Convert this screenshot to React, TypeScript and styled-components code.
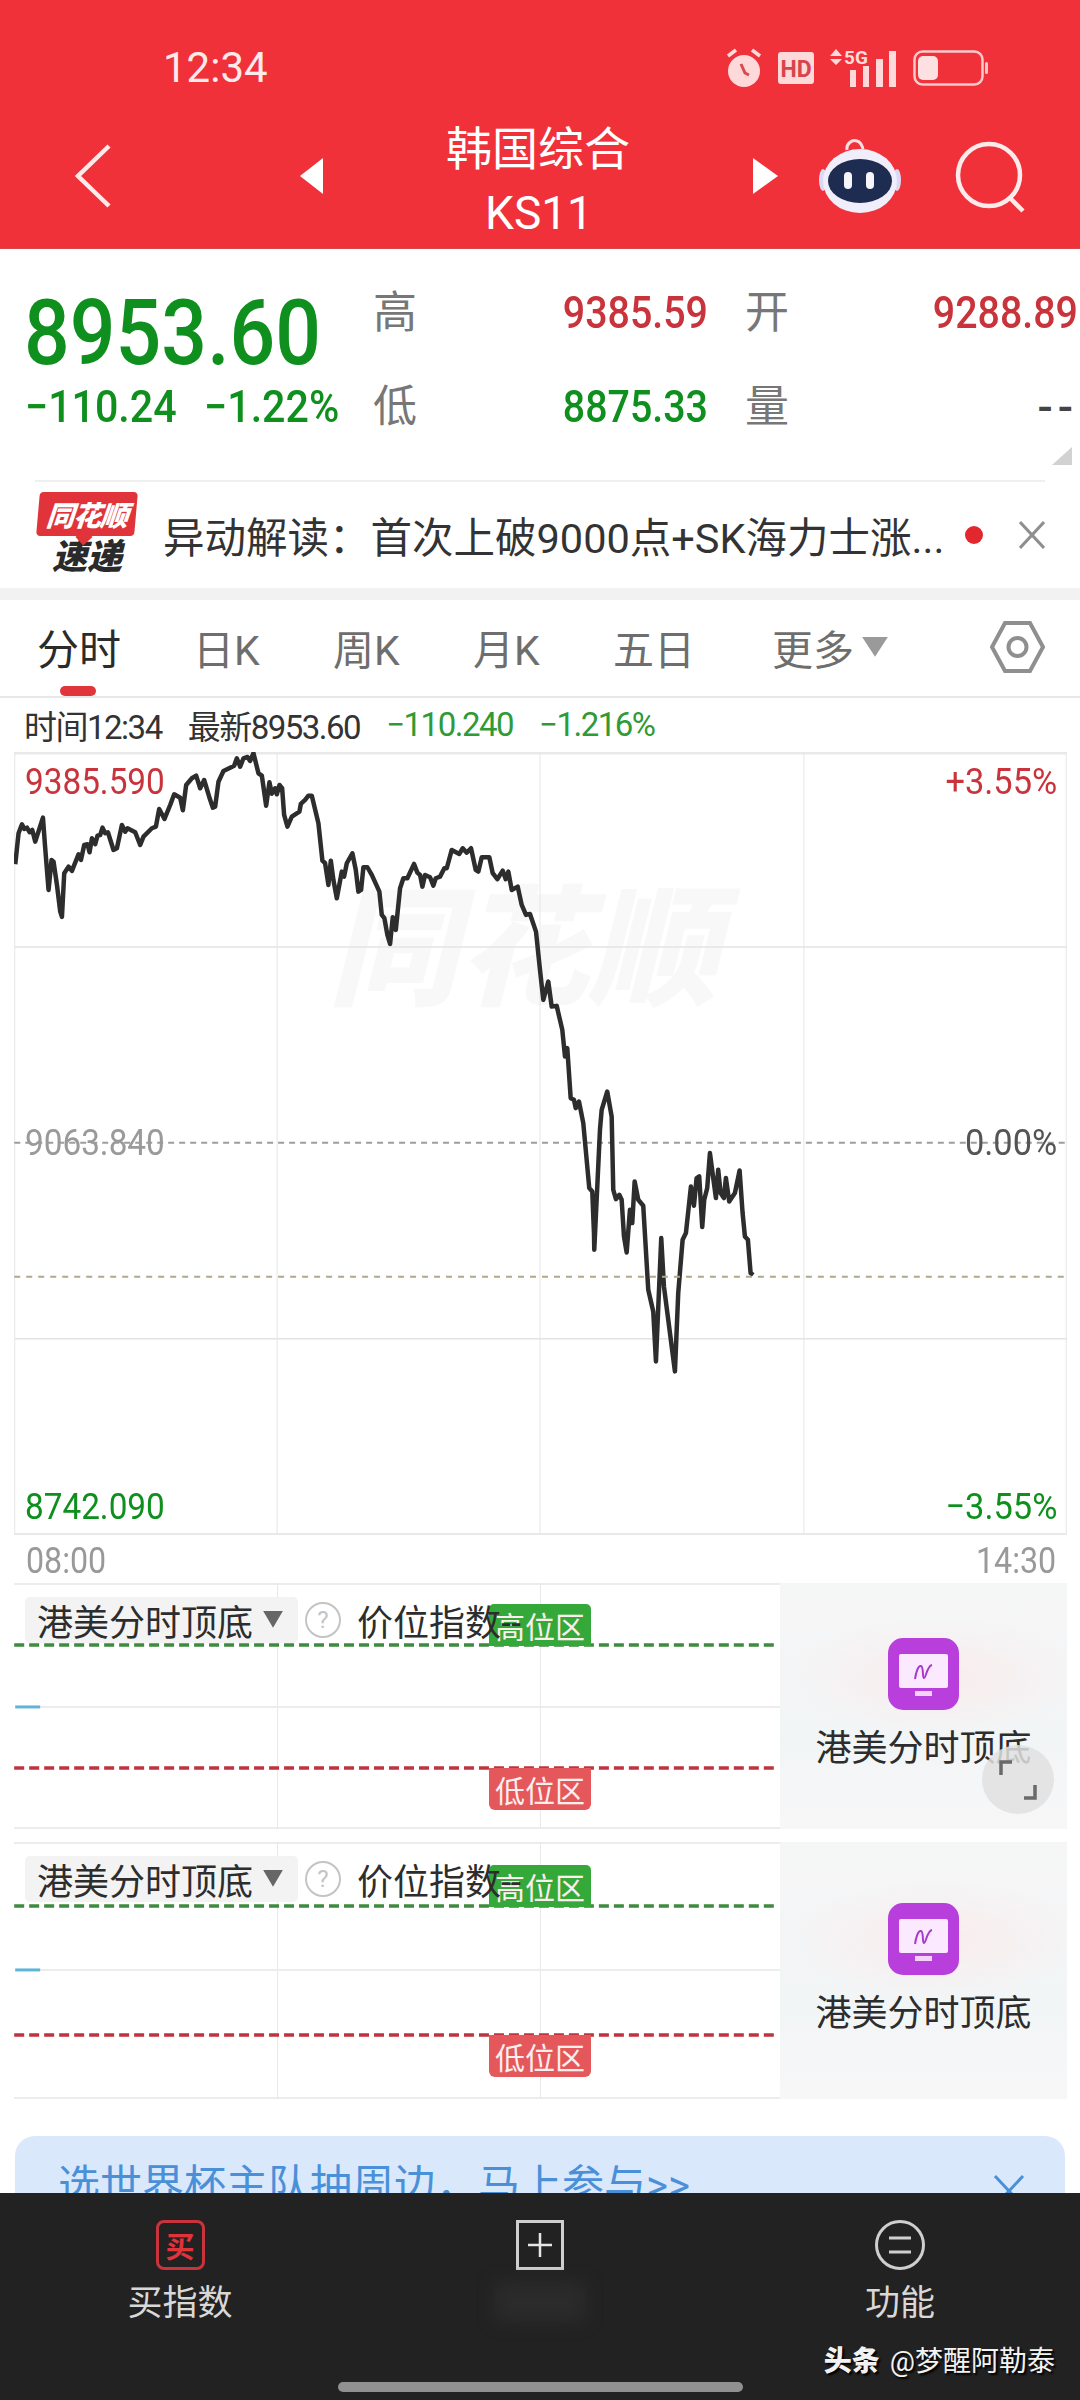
import React from 'react';
import styled, { createGlobalStyle } from 'styled-components';

const GlobalStyle = createGlobalStyle`
  html, body {
    margin: 0;
    padding: 0;
    background: #fff;
  }
  * {
    box-sizing: border-box;
  }
`;

const FONT = `Roboto, "Noto Sans CJK SC", sans-serif`;
const RED = '#c9333b';
const GREEN = '#0f8f1e';

const Page = styled.div`
  width: 1080px;
  height: 2400px;
  overflow: hidden;
  display: flex;
  flex-direction: column;
  background: #fff;
  font-family: ${FONT};
`;

/* header */
const Header = styled.header`
  height: 249px;
  background: #f03139;
  border-bottom: 1px solid #d6474c;
  color: #fff;
`;

const StatusBar = styled.div`
  height: 104px;
  padding: 32px 92px 0 163px;
  display: flex;
  align-items: center;
  justify-content: space-between;
`;

const Clock = styled.div`
  font-size: 42px;
  line-height: 72px;
  color: #fdeaea;
`;

const StatusIcons = styled.div`
  display: flex;
  align-items: center;
  gap: 16px;
`;

const Nav = styled.nav`
  height: 144px;
  padding: 0 55px 0 75px;
  display: flex;
  align-items: center;
`;

const BackIcon = styled.svg`
  width: 36px;
  height: 64px;
  margin-right: 189px;
  flex-shrink: 0;
`;

const NavTitle = styled.div`
  flex: 1;
  padding-top: 10px;
  display: flex;
  flex-direction: column;
  align-items: center;
`;

const TitleLine = styled.div`
  font-size: 46px;
  line-height: 64px;
`;

const CodeLine = styled.div`
  font-size: 46px;
  line-height: 64px;
  padding-left: 2px;
`;

const RobotIcon = styled.svg`
  width: 82px;
  height: 76px;
  margin-left: 41px;
  flex-shrink: 0;
`;

const SearchIcon = styled.svg`
  width: 70px;
  height: 72px;
  margin: 2px 0 0 54px;
  flex-shrink: 0;
`;

/* quote */
const Quote = styled.section`
  position: relative;
  height: 231px;
  padding: 20px 2px 0 27px;
  display: grid;
  grid-template-columns: 346px 50px 285px 37px 50px 283px;
  grid-template-rows: 88px 88px;
  row-gap: 6px;
`;

const Price = styled.div`
  margin-left: -3px;
  padding-top: 29px;
  font-size: 90px;
  font-weight: 500;
  line-height: 72px;
  color: ${GREEN};
  transform: scaleX(0.895);
  transform-origin: left center;
  white-space: nowrap;
`;

const ChangeRow = styled.div`
  align-self: center;
  margin-left: -2px;
  display: flex;
  gap: 30px;
  font-size: 45px;
  font-weight: 500;
  line-height: 50px;
  color: ${GREEN};
  transform: scaleX(0.915);
  transform-origin: left center;
  white-space: nowrap;
`;

const QuoteLabel = styled.div`
  font-size: 44px;
  line-height: 88px;
  color: #777;
`;

const QuoteValue = styled.div<{ $color: string }>`
  font-size: 45px;
  font-weight: 500;
  line-height: 88px;
  text-align: right;
  color: ${props => props.$color};
  transform: scaleX(0.875);
  transform-origin: right center;
`;

const NoVolume = styled(QuoteValue)`
  letter-spacing: 5px;
  transform: none;
`;

const CornerMark = styled.div`
  position: absolute;
  left: 1052px;
  top: 198px;
  width: 20px;
  height: 18px;
  background: #d2d2d2;
  clip-path: polygon(100% 0, 100% 100%, 0 100%);
`;

const Separator = styled.div`
  height: 2px;
  margin: 0 35px;
  background: #efefef;
`;

/* news ticker */
const News = styled.section`
  height: 106px;
  padding: 0 35px 0 37px;
  display: flex;
  align-items: center;
`;

const NewsLogo = styled.div`
  width: 100px;
  flex-shrink: 0;
  display: flex;
  flex-direction: column;
  align-items: center;
`;

const LogoBubble = styled.div`
  position: relative;
  width: 98px;
  height: 44px;
  background: #e0333a;
  border-radius: 4px;
  transform: skewX(-5deg);
  display: flex;
  align-items: center;
  justify-content: center;
  color: #fff;
  font-size: 28px;
  font-weight: 900;
  font-style: italic;
  letter-spacing: -1px;
  &::after {
    content: '';
    position: absolute;
    left: 42px;
    bottom: -7px;
    width: 12px;
    height: 12px;
    background: #e0333a;
    transform: rotate(45deg);
  }
`;

const LogoWord = styled.div`
  margin-top: 3px;
  font-size: 35px;
  line-height: 38px;
  font-weight: 900;
  font-style: italic;
  color: #2a2a2a;
`;

const NewsText = styled.div`
  flex: 1;
  margin-left: 26px;
  font-size: 41.5px;
  color: #333;
  white-space: nowrap;
`;

const NewsDot = styled.div`
  width: 18px;
  height: 18px;
  margin-right: 36px;
  border-radius: 50%;
  background: #e2282e;
  flex-shrink: 0;
`;

const CloseIcon = styled.svg`
  width: 26px;
  height: 28px;
  flex-shrink: 0;
`;

const Band = styled.div`
  height: 12px;
  background: #f2f2f2;
`;

/* tabs */
const Tabs = styled.div`
  height: 98px;
  padding: 0 0 2px 37px;
  border-bottom: 2px solid #e8e8e8;
  display: grid;
  grid-template-columns: 156px 140px 140px 140px 159px 218px 55px;
  align-items: stretch;
`;

const Tab = styled.div<{ $active?: boolean }>`
  position: relative;
  display: flex;
  align-items: center;
  gap: 8px;
  font-size: ${props => (props.$active ? 42 : 41)}px;
  color: ${props => (props.$active ? '#2b2b2b' : '#6e6e6e')};
  ${props =>
    props.$active &&
    `&::after {
      content: '';
      position: absolute;
      left: 23px;
      bottom: -2px;
      width: 36px;
      height: 10px;
      border-radius: 5px;
      background: #e0353a;
    }`}
`;

const TabCaret = styled.span`
  width: 26px;
  height: 20px;
  margin-top: 0;
  background: #9a9a9a;
  clip-path: polygon(0 0, 100% 0, 50% 100%);
`;

const SettingsCell = styled.div`
  display: flex;
  align-items: center;
`;

/* intraday info */
const InfoRow = styled.div`
  height: 54px;
  padding-left: 24px;
  display: flex;
  align-items: center;
  gap: 26px;
  font-size: 33px;
  color: #333;
`;

const InfoItem = styled.span<{ $color?: string }>`
  color: ${props => props.$color || '#333'};
  letter-spacing: -1.5px;
`;

/* main chart */
const Chart = styled.div`
  position: relative;
  height: 784px;
  margin: 0 13px 0 14px;
`;

const ChartSvg = styled.svg`
  position: absolute;
  inset: 0;
  width: 100%;
  height: 100%;
`;

const Watermark = styled.div`
  position: absolute;
  left: 314px;
  top: 124px;
  font-size: 130px;
  line-height: 150px;
  font-weight: 900;
  font-style: italic;
  color: #f8f8f8;
  white-space: nowrap;
`;

const ChartLabel = styled.div<{ $color: string; $top: number; $right?: boolean }>`
  position: absolute;
  top: ${props => props.$top}px;
  ${props => (props.$right ? 'right: 10px;' : 'left: 11px;')}
  font-size: 37px;
  line-height: 44px;
  color: ${props => props.$color};
  transform: scaleX(${props => (props.$right ? 0.93 : 0.9)});
  transform-origin: ${props => (props.$right ? 'right' : 'left')} center;
`;

const TimeRow = styled.div`
  height: 48px;
  padding: 2px 24px 0 26px;
  display: flex;
  align-items: center;
  justify-content: space-between;
  font-size: 37px;
  color: #999;
`;

const TimeLabel = styled.span<{ $right?: boolean }>`
  display: inline-block;
  transform: scaleX(0.87);
  transform-origin: ${props => (props.$right ? 'right' : 'left')} center;
`;

/* indicator panels */
const Panel = styled.div<{ $h: number }>`
  height: ${props => props.$h}px;
  margin: 0 13px 13px 14px;
  display: flex;
`;

const PanelChart = styled.div`
  position: relative;
  flex: 1;
`;

const PanelSvg = styled.svg`
  position: absolute;
  inset: 0;
  width: 100%;
  height: 100%;
`;

const ZoneTag = styled.div<{ $kind: 'high' | 'low'; $top: number }>`
  position: absolute;
  left: 475px;
  top: ${props => props.$top}px;
  width: 102px;
  height: 42px;
  display: flex;
  align-items: center;
  justify-content: center;
  font-size: 30px;
  color: #fbeeee;
  background: ${props => (props.$kind === 'high' ? '#35a83a' : '#e4585b')};
  border-radius: ${props => (props.$kind === 'high' ? '5px 5px 0 0' : '0 0 6px 6px')};
`;

const PanelHead = styled.div`
  position: absolute;
  left: 11px;
  top: 11px;
  display: flex;
  align-items: center;
`;

const Chip = styled.div`
  width: 273px;
  height: 46px;
  padding-left: 12px;
  background: #f3f3f3;
  border-radius: 5px;
  display: flex;
  align-items: center;
  gap: 10px;
  font-size: 36px;
  color: #2d2d2d;
`;

const ChipCaret = styled.span`
  width: 20px;
  height: 17px;
  margin-top: -2px;
  background: #666;
  clip-path: polygon(0 0, 100% 0, 50% 100%);
`;

const HelpMark = styled.div`
  width: 36px;
  height: 36px;
  margin-left: 7px;
  border: 2px solid #c4c4c4;
  border-radius: 50%;
  display: flex;
  align-items: center;
  justify-content: center;
  font-size: 24px;
  color: #c4c4c4;
`;

const HeadText = styled.div`
  margin-left: 16px;
  font-size: 36px;
  color: #2d2d2d;
  white-space: nowrap;
`;

const PanelSide = styled.div`
  position: relative;
  width: 287px;
  flex-shrink: 0;
  display: flex;
  flex-direction: column;
  align-items: center;
  justify-content: center;
  gap: 14px;
  background:
    radial-gradient(ellipse 150px 60px at 55% 38%, #f9eced 0%, rgba(249, 236, 237, 0) 100%),
    linear-gradient(180deg, #f6f6f6 0%, #f2f5f6 65%, #f7f7f8 100%);
`;

const SideText = styled.div`
  font-size: 36px;
  line-height: 50px;
  color: #2d2d2d;
`;

const ExpandButton = styled.div`
  position: absolute;
  left: 202px;
  top: 162px;
  width: 72px;
  height: 69px;
  border-radius: 50%;
  background: rgba(224, 224, 224, 0.85);
  display: flex;
  align-items: center;
  justify-content: center;
`;

/* promo banner */
const Banner = styled.div`
  height: 57px;
  margin: 24px 15px 0;
  padding: 22px 40px 0 43px;
  border-radius: 20px 20px 0 0;
  background: #d9e8fb;
  overflow: hidden;
  display: flex;
  justify-content: space-between;
  font-size: 42px;
  line-height: 56px;
  color: #4a90d9;
  white-space: nowrap;
`;

const BannerClose = styled.svg`
  width: 32px;
  height: 32px;
  margin-top: 16px;
  flex-shrink: 0;
`;

/* bottom bar */
const Footer = styled.footer`
  position: relative;
  height: 207px;
  background: #222;
  padding-top: 27px;
`;

const FooterItems = styled.div`
  display: grid;
  grid-template-columns: repeat(3, 1fr);
`;

const FooterItem = styled.div`
  display: flex;
  flex-direction: column;
  align-items: center;
`;

const BuyIcon = styled.div`
  width: 49px;
  height: 50px;
  border: 3px solid ${RED};
  border-radius: 8px;
  display: flex;
  align-items: center;
  justify-content: center;
  font-size: 29px;
  font-weight: 700;
  color: #e0333a;
`;

const FooterLabel = styled.div`
  margin-top: 11px;
  height: 46px;
  font-size: 35px;
  line-height: 46px;
  color: #d8d8d8;
`;

const Smudge = styled.div`
  margin-top: 12px;
  width: 90px;
  height: 40px;
  background: #2b2b2b;
  filter: blur(8px);
`;

const HomeBar = styled.div`
  width: 405px;
  height: 10px;
  margin: 55px auto 0;
  border-radius: 5px;
  background: #909090;
`;

const Credit = styled.div`
  position: absolute;
  right: 25px;
  top: 151px;
  font-size: 28px;
  line-height: 36px;
  color: #f2f2f2;
  text-shadow: 2px 2px 2px #000;
  white-space: nowrap;
`;

const CreditBrand = styled.span`
  font-weight: 900;
  margin-right: 10px;
`;

type Pt = [number, number];

// traced from the reference, each run in its own crop coords (3x)
const crop = (x0: number, y0: number, pts: Pt[]): Pt[] =>
  pts.map(([x, y]) => [x0 + x / 3, y0 + y / 3]);

const TRACE: Pt[] = [
  ...crop(10, 745, [
    [15, 358], [25, 265], [35, 238], [42, 252], [50, 248], [58, 262], [66, 255], [75, 290], [98, 218],
    [104, 300], [115, 435], [124, 345], [130, 350], [140, 420], [150, 500], [155, 516], [162, 385],
    [175, 365], [185, 378], [205, 328], [212, 345], [222, 300], [232, 298], [238, 322], [245, 280],
    [255, 298], [262, 272], [270, 270], [277, 248], [285, 265], [293, 262], [310, 315], [320, 310],
    [335, 240], [345, 260], [352, 250], [375, 262], [390, 300], [400, 275], [425, 250], [437, 245],
    [447, 192], [463, 222], [480, 180], [492, 148], [510, 158], [518, 196], [528, 120], [545, 100],
    [558, 92], [570, 130], [582, 105], [597, 155], [608, 188], [615, 185], [625, 110], [640, 78],
    [660, 68], [672, 62], [680, 40], [690, 65], [700, 40], [712, 36], [720, 48], [730, 24], [745, 85],
    [755, 92], [768, 182], [778, 112], [785, 146], [795, 130], [800, 148], [808, 120], [816, 130],
    [822, 210], [832, 245], [845, 215], [868, 200],
  ]),
  ...crop(290, 780, [
    [32, 72], [45, 60], [55, 47], [65, 47], [85, 130], [97, 242], [105, 250], [115, 315], [122, 242],
    [130, 300], [140, 355], [155, 275], [162, 290], [170, 250], [187, 220], [197, 270], [205, 335],
    [213, 330], [220, 262], [232, 262], [245, 285], [268, 335], [275, 405], [283, 415], [292, 465],
    [300, 492], [308, 412], [317, 450], [330, 325], [340, 295], [352, 295], [372, 252], [382, 278],
    [390, 285], [397, 320], [405, 285], [420, 292], [430, 317], [437, 295], [450, 290], [463, 265],
    [470, 265], [485, 210], [508, 222], [518, 205], [530, 218], [543, 205], [557, 270], [565, 275],
    [575, 232], [598, 232], [608, 280], [622, 298], [638, 272], [647, 298], [655, 275], [665, 330],
    [683, 320], [695, 375], [708, 405], [720, 402], [738, 455],
  ]),
  ...crop(530, 900, [
    [30, 210], [40, 300], [55, 245], [65, 320], [80, 318], [97, 390], [105, 470], [112, 445], [122, 595],
    [132, 600], [137, 625], [147, 605], [160, 670], [178, 865], [187, 875], [192, 1000],
  ]),
  ...crop(590, 1130, [[13, 360], [30, 0]]),
  ...crop(530, 900, [[215, 630], [232, 575], [245, 650], [250, 870]]),
  ...crop(590, 1130, [
    [78, 208], [88, 195], [95, 210], [102, 320], [110, 368], [120, 240], [127, 280], [134, 155], [145, 210],
    [160, 228], [175, 480], [190, 545], [198, 695], [214, 325], [222, 470], [255, 725], [265, 490],
    [278, 330], [288, 310], [303, 170], [312, 228], [320, 145], [328, 140], [337, 292], [343, 210],
    [352, 175], [360, 70], [378, 205], [385, 120], [392, 190], [402, 205], [408, 145], [418, 215],
    [435, 190], [449, 122], [458, 250], [465, 320], [474, 330], [482, 430], [490, 436],
  ]),
];

const TRACE_D = 'M' + TRACE.map(([x, y]) => `${x.toFixed(1)} ${y.toFixed(1)}`).join('L');

const TABS = [
  { label: '分时', active: true },
  { label: '日K' },
  { label: '周K' },
  { label: '月K' },
  { label: '五日' },
];

const NEWS_TEXT = '异动解读\uFF1A首次上破9000点+SK海力士涨...';
const BANNER_TEXT = '选世界杯主队抽周边\uFF0C马上参与>>';

const StatusGlyphs: React.FC = () => (
  <StatusIcons>
    <svg width="36" height="42" viewBox="0 0 36 42">
      <circle cx="18" cy="24" r="16" fill="#fdd9da" />
      <path d="M15 17l4 9 4 2" fill="none" stroke="#e0464c" strokeWidth="3" />
      <path d="M2 9l8-6M34 9l-8-6" stroke="#fdd9da" strokeWidth="3.5" />
    </svg>
    <svg width="36" height="32" viewBox="0 0 36 32">
      <rect width="36" height="32" rx="3" fill="#fdd9da" />
      <text x="18" y="25" fontFamily="Roboto" fontSize="23" fontWeight="700" textAnchor="middle" fill="#d8444a">
        HD
      </text>
    </svg>
    <svg width="67" height="38" viewBox="0 0 67 38">
      <path d="M0 7l6-7 6 7zM0 10h12l-6 6z" fill="#fdd9da" />
      <text x="14" y="15" fontFamily="Roboto" fontSize="19" fontWeight="700" fill="#fdd9da">
        5G
      </text>
      <path d="M20 21h6v17h-6zM33 17h6v21h-6zM46 10h7v28h-7zM59 2h7v36h-7z" fill="#fdd9da" />
    </svg>
    <svg width="75" height="36" viewBox="0 0 75 36">
      <rect x="1.5" y="1.5" width="68" height="33" rx="8" fill="none" stroke="#fdc9cb" strokeWidth="2.5" />
      <rect x="5" y="6" width="20" height="24" rx="5" fill="#fde0e1" />
      <rect x="72" y="12" width="3" height="12" rx="1.5" fill="#fdc9cb" />
    </svg>
  </StatusIcons>
);

const Robot: React.FC = () => (
  <RobotIcon viewBox="0 0 82 76">
    <path d="M28 12c-1-6 5-11 10-9 4 1 5 4 6 8" fill="none" stroke="#f5dfe6" strokeWidth="3" />
    <ellipse cx="4" cy="42" rx="4" ry="11" fill="#dcd8f3" />
    <ellipse cx="78" cy="42" rx="4" ry="11" fill="#dcd8f3" />
    <ellipse cx="41" cy="43" rx="37" ry="32" fill="#f1eefb" />
    <ellipse cx="41" cy="43" rx="32" ry="22" fill="#1d2c50" />
    <rect x="25" y="34" width="8" height="17" rx="4" fill="#f5f5fa" />
    <rect x="47" y="34" width="8" height="17" rx="4" fill="#f5f5fa" />
  </RobotIcon>
);

const SmallMonitor: React.FC = () => (
  <svg width="71" height="72" viewBox="0 0 71 72">
    <rect width="71" height="72" rx="15" fill="#b93fdc" />
    <rect x="11" y="16" width="49" height="34" rx="2" fill="#fbeaff" />
    <rect x="27" y="53" width="17" height="5" fill="#f5d2fb" />
    <path d="M27 41c1-6 3-14 6-13s1 12 3 12 3-12 8-13" fill="none" stroke="#a739cf" strokeWidth="2" />
  </svg>
);

const IndicatorPanel: React.FC<{ h: number; high: number; mid: number; low: number; expand?: boolean }> = ({
  h,
  high,
  mid,
  low,
  expand,
}) => (
  <Panel $h={h}>
    <PanelChart>
      <PanelSvg viewBox={`0 0 766 ${h}`}>
        <path d={`M0 1H766M0 ${h - 1}H766`} stroke="#ececec" strokeWidth="2" />
        <path d={`M263.5 0V${h}M526.5 0V${h}`} stroke="#e8e8e8" strokeWidth="1" />
        <path d={`M26 ${mid}H766`} stroke="#ececec" strokeWidth="2" />
        <path d={`M1 ${mid}H26`} stroke="#5fb4d8" strokeWidth="3" />
        <path d={`M0 ${high}H762`} stroke="#3e8a3e" strokeWidth="3.5" strokeDasharray="10 5" />
        <path d={`M0 ${low}H762`} stroke="#c0333e" strokeWidth="3.5" strokeDasharray="10 5" />
      </PanelSvg>
      <ZoneTag $kind="high" $top={high - 41}>
        高位区
      </ZoneTag>
      <ZoneTag $kind="low" $top={low}>
        低位区
      </ZoneTag>
      <PanelHead>
        <Chip>
          港美分时顶底
          <ChipCaret />
        </Chip>
        <HelpMark>?</HelpMark>
        <HeadText>价位指数--</HeadText>
      </PanelHead>
    </PanelChart>
    <PanelSide>
      <SmallMonitor />
      <SideText>港美分时顶底</SideText>
      {expand && (
        <ExpandButton>
          <svg width="38" height="40" viewBox="0 0 38 40">
            <path d="M13 2H2V15" fill="none" stroke="#6a6a6a" strokeWidth="3.5" />
            <path d="M25 38H36V25" fill="none" stroke="#6a6a6a" strokeWidth="3.5" />
          </svg>
        </ExpandButton>
      )}
    </PanelSide>
  </Panel>
);

const App: React.FC = () => (
  <Page>
    <GlobalStyle />
    <Header>
      <StatusBar>
        <Clock>12:34</Clock>
        <StatusGlyphs />
      </StatusBar>
      <Nav>
        <BackIcon viewBox="0 0 36 64">
          <path d="M34 2L3 32l31 30" fill="none" stroke="#fdeaea" strokeWidth="4.5" />
        </BackIcon>
        <svg width="23" height="36" viewBox="0 0 23 36">
          <path d="M23 0V36L0 18Z" fill="#fff" />
        </svg>
        <NavTitle>
          <TitleLine>韩国综合</TitleLine>
          <CodeLine>KS11</CodeLine>
        </NavTitle>
        <svg width="25" height="36" viewBox="0 0 25 36">
          <path d="M0 0V36L25 18Z" fill="#fff" />
        </svg>
        <Robot />
        <SearchIcon viewBox="0 0 70 72">
          <circle cx="34" cy="34" r="31" fill="none" stroke="#fdeaea" strokeWidth="4.5" />
          <path d="M54 56l14 14" stroke="#fdeaea" strokeWidth="4.5" />
        </SearchIcon>
      </Nav>
    </Header>

    <Quote>
      <Price>8953.60</Price>
      <QuoteLabel>高</QuoteLabel>
      <QuoteValue $color={RED}>9385.59</QuoteValue>
      <span />
      <QuoteLabel>开</QuoteLabel>
      <QuoteValue $color={RED}>9288.89</QuoteValue>
      <ChangeRow>
        <span>−110.24</span>
        <span>−1.22%</span>
      </ChangeRow>
      <QuoteLabel>低</QuoteLabel>
      <QuoteValue $color={GREEN}>8875.33</QuoteValue>
      <span />
      <QuoteLabel>量</QuoteLabel>
      <NoVolume $color="#444">--</NoVolume>
      <CornerMark />
    </Quote>
    <Separator />

    <News>
      <NewsLogo>
        <LogoBubble>同花顺</LogoBubble>
        <LogoWord>速递</LogoWord>
      </NewsLogo>
      <NewsText>{NEWS_TEXT}</NewsText>
      <NewsDot />
      <CloseIcon viewBox="0 0 26 28">
        <path d="M1 1l24 26M25 1L1 27" stroke="#8f8f8f" strokeWidth="3" />
      </CloseIcon>
    </News>
    <Band />

    <Tabs>
      {TABS.map(t => (
        <Tab key={t.label} $active={t.active}>
          {t.label}
        </Tab>
      ))}
      <Tab>
        更多
        <TabCaret />
      </Tab>
      <SettingsCell>
        <svg width="55" height="54" viewBox="0 0 55 54">
          <path d="M15 3h25l13 24-13 24H15L2 27Z" fill="none" stroke="#8f8f8f" strokeWidth="4" />
          <circle cx="27.5" cy="27" r="9" fill="none" stroke="#8f8f8f" strokeWidth="4" />
        </svg>
      </SettingsCell>
    </Tabs>

    <InfoRow>
      <InfoItem>时间12:34</InfoItem>
      <InfoItem>最新8953.60</InfoItem>
      <InfoItem $color="#2f9a36">−110.240</InfoItem>
      <InfoItem $color="#2f9a36">−1.216%</InfoItem>
    </InfoRow>

    <Chart>
      <Watermark>同花顺</Watermark>
      <ChartSvg viewBox="14 752 1053 784">
        <path d="M14 753H1067M14 1535H1067" stroke="#e9e9e9" strokeWidth="3" />
        <path d="M14.5 752V1535M1066.5 752V1535M277 752V1535M540 752V1535M804 752V1535" stroke="#e6e6e6" strokeWidth="1" />
        <path d="M14 947H1067M14 1339H1067" stroke="#e4e4e4" strokeWidth="1.5" />
        <path d="M14 1143H1067" stroke="#9d9d9d" strokeWidth="2" strokeDasharray="6 5" />
        <path d={TRACE_D} fill="none" stroke="#2d2d2d" strokeWidth="4.5" strokeLinejoin="round" />
        <path d="M14 1277H1067" stroke="#b0a988" strokeWidth="2" strokeDasharray="6 6" />
      </ChartSvg>
      <ChartLabel $color={RED} $top={8}>
        9385.590
      </ChartLabel>
      <ChartLabel $color={RED} $top={8} $right>
        +3.55%
      </ChartLabel>
      <ChartLabel $color="#9a9a9a" $top={369}>
        9063.840
      </ChartLabel>
      <ChartLabel $color="#555" $top={369} $right>
        0.00%
      </ChartLabel>
      <ChartLabel $color={GREEN} $top={733}>
        8742.090
      </ChartLabel>
      <ChartLabel $color={GREEN} $top={733} $right>
        −3.55%
      </ChartLabel>
    </Chart>
    <TimeRow>
      <TimeLabel>08:00</TimeLabel>
      <TimeLabel $right>14:30</TimeLabel>
    </TimeRow>

    <IndicatorPanel h={246} high={62} mid={124} low={185} expand />
    <IndicatorPanel h={257} high={64} mid={128} low={193} />

    <Banner>
      <span>{BANNER_TEXT}</span>
      <BannerClose viewBox="0 0 32 32">
        <path d="M2 2l28 30M30 2L2 32" stroke="#4a90d9" strokeWidth="3" />
      </BannerClose>
    </Banner>

    <Footer>
      <FooterItems>
        <FooterItem>
          <BuyIcon>买</BuyIcon>
          <FooterLabel>买指数</FooterLabel>
        </FooterItem>
        <FooterItem>
          <svg width="48" height="50" viewBox="0 0 48 50">
            <rect x="1.5" y="1.5" width="45" height="47" fill="none" stroke="#cfcfcf" strokeWidth="3" />
            <path d="M24 13V37M12 25H36" stroke="#e6e6e6" strokeWidth="2.5" />
          </svg>
          <Smudge />
        </FooterItem>
        <FooterItem>
          <svg width="50" height="50" viewBox="0 0 50 50">
            <circle cx="25" cy="25" r="23.5" fill="none" stroke="#cfcfcf" strokeWidth="3" />
            <path d="M14 18H36M14 32H36" stroke="#cfcfcf" strokeWidth="3" />
          </svg>
          <FooterLabel>功能</FooterLabel>
        </FooterItem>
      </FooterItems>
      <HomeBar />
      <Credit>
        <CreditBrand>头条</CreditBrand>@梦醒阿勒泰
      </Credit>
    </Footer>
  </Page>
);

export default App;
